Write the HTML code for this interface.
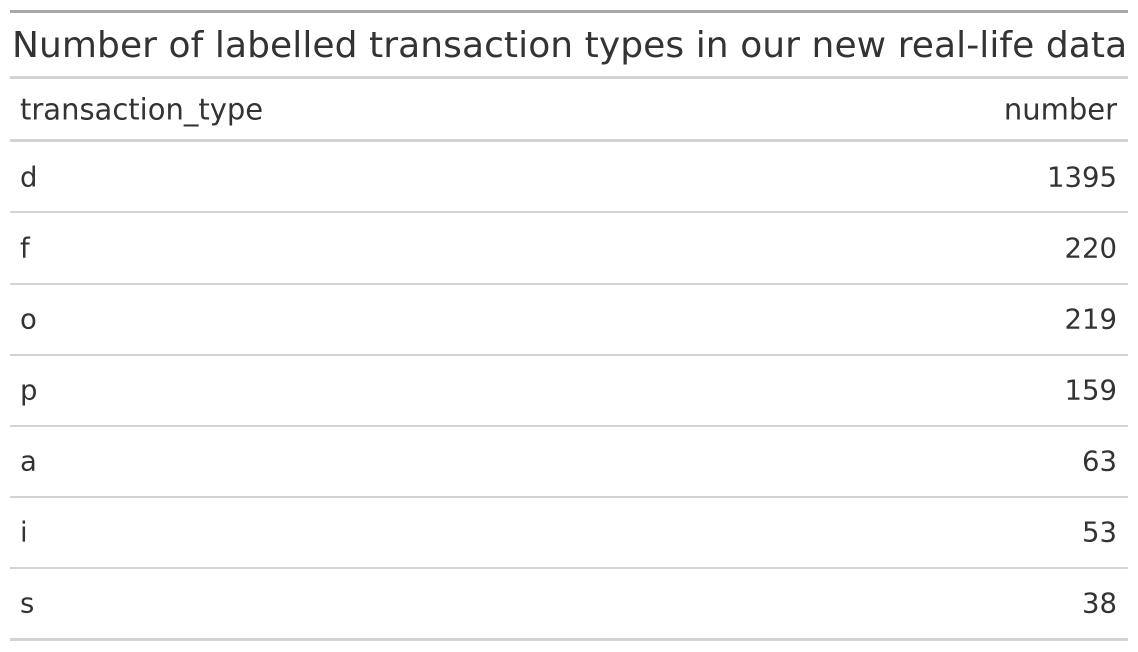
<!DOCTYPE html>
<html><head><meta charset="utf-8"><style>
body{margin:0;width:1138px;height:652px;background:#fff;position:relative;overflow:hidden;font-family:"DejaVu Sans","Liberation Sans",sans-serif;color:#333}
.l{position:absolute;left:10px;width:1118px}
.t{position:absolute;line-height:1;white-space:nowrap}
.L{left:20px}.R{right:21px}
.c{font-size:27.5px;transform:translateY(-50%)}
.h{font-size:29px}
</style></head><body>
<div class="l" style="top:10px;height:3px;background:#a8a8a8"></div>
<div class="t" style="left:12px;top:28px;font-size:36px;letter-spacing:0.07px">Number of labelled transaction types in our new real-life data</div>
<div class="l" style="top:76px;height:3px;background:#d3d3d3"></div>
<div class="t c h L" style="top:110px">transaction_type</div>
<div class="t c h R" style="top:110px">number</div>
<div class="l" style="top:139px;height:3px;background:#d3d3d3"></div>

<div class="t c L" style="top:178px">d</div><div class="t c R" style="top:178px">1395</div>
<div class="l" style="top:211px;height:2px;background:#d3d3d3"></div>
<div class="t c L" style="top:249px">f</div><div class="t c R" style="top:249px">220</div>
<div class="l" style="top:283px;height:2px;background:#d3d3d3"></div>
<div class="t c L" style="top:320px">o</div><div class="t c R" style="top:320px">219</div>
<div class="l" style="top:354px;height:2px;background:#d3d3d3"></div>
<div class="t c L" style="top:391px">p</div><div class="t c R" style="top:391px">159</div>
<div class="l" style="top:425px;height:2px;background:#d3d3d3"></div>
<div class="t c L" style="top:462px">a</div><div class="t c R" style="top:462px">63</div>
<div class="l" style="top:496px;height:2px;background:#d3d3d3"></div>
<div class="t c L" style="top:533px">i</div><div class="t c R" style="top:533px">53</div>
<div class="l" style="top:567px;height:2px;background:#d3d3d3"></div>
<div class="t c L" style="top:604px">s</div><div class="t c R" style="top:604px">38</div>
<div class="l" style="top:638px;height:3px;background:#d3d3d3"></div>
</body></html>
